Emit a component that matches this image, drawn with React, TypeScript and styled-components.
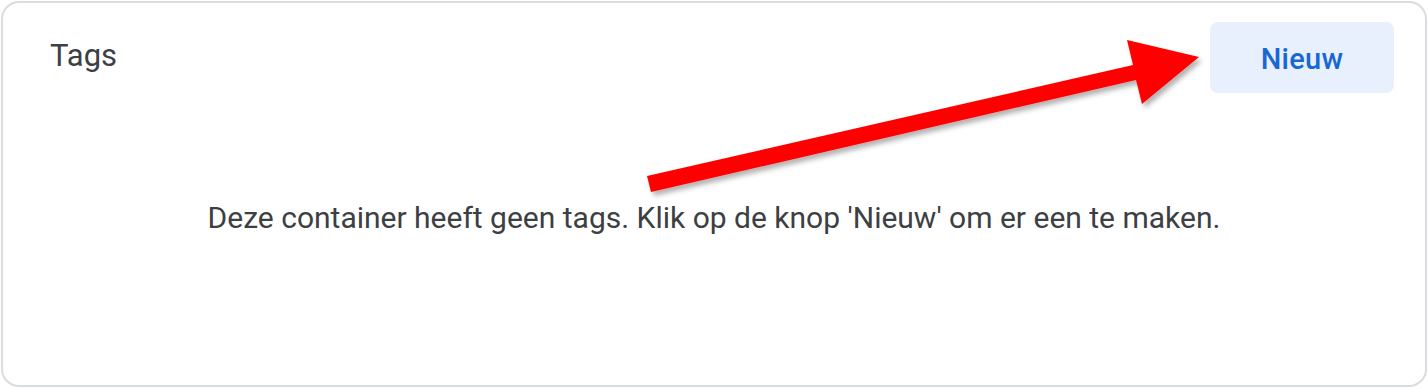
import React from "react";
import styled, { createGlobalStyle } from "styled-components";

const Global = createGlobalStyle`
  html, body { margin: 0; padding: 0; background: #ffffff; }
  body { font-family: Roboto, "Noto Sans", Arial, sans-serif; }
  * { box-sizing: border-box; }
`;

const Page = styled.div`
  width: 1428px;
  height: 388px;
  padding: 1px;
  position: relative;
`;

const Card = styled.section`
  width: 1426px;
  height: 386px;
  border: 2px solid #dadce0;
  border-radius: 18px;
  background: #fff;
  display: flex;
  flex-direction: column;
`;

const Header = styled.header`
  display: flex;
  justify-content: space-between;
  align-items: flex-start;
  padding: 19px 31px 0 47px;
`;

const Title = styled.h2`
  margin: 14px 0 0;
  font-family: Roboto, "Open Sans", sans-serif;
  font-weight: 400;
  font-size: 31px;
  line-height: 40px;
  color: #3c4043;
  letter-spacing: 0;
`;

const NewButton = styled.button`
  width: 184px;
  height: 71px;
  padding: 2px 0 0;
  border: none;
  border-radius: 8px;
  background: #e8f0fe;
  color: #1967d2;
  font-family: Roboto, "Open Sans", sans-serif;
  font-weight: 500;
  font-size: 29px;
  letter-spacing: 0.3px;
  cursor: pointer;
`;

const Body = styled.div`
  flex: 1;
  display: flex;
  justify-content: center;
  padding-top: 107px;
`;

const Message = styled.p`
  margin: 0;
  font-family: Roboto, sans-serif;
  font-size: 30px;
  line-height: 36px;
  color: #3c4043;
`;

const Annotation = styled.svg`
  position: absolute;
  left: 0;
  top: 0;
  pointer-events: none;
`;

export default function App() {
  return (
    <>
      <Global />
      <Page>
        <Card>
          <Header>
            <Title>Tags</Title>
            <NewButton>Nieuw</NewButton>
          </Header>
          <Body>
            <Message>
              Deze container heeft geen tags. Klik op de knop 'Nieuw' om er een te maken.
            </Message>
          </Body>
        </Card>
        <Annotation width="1428" height="388" viewBox="0 0 1428 388">
          <defs>
            <filter id="sh" x="-10%" y="-10%" width="130%" height="140%">
              <feDropShadow dx="3" dy="4" stdDeviation="2.5" floodColor="#000" floodOpacity="0.3" />
            </filter>
          </defs>
          <polygon
            fill="#ff0000"
            filter="url(#sh)"
            points="647,176 1133,65 1127,40 1199,57 1142,104 1136,80 651,192"
          />
        </Annotation>
      </Page>
    </>
  );
}
